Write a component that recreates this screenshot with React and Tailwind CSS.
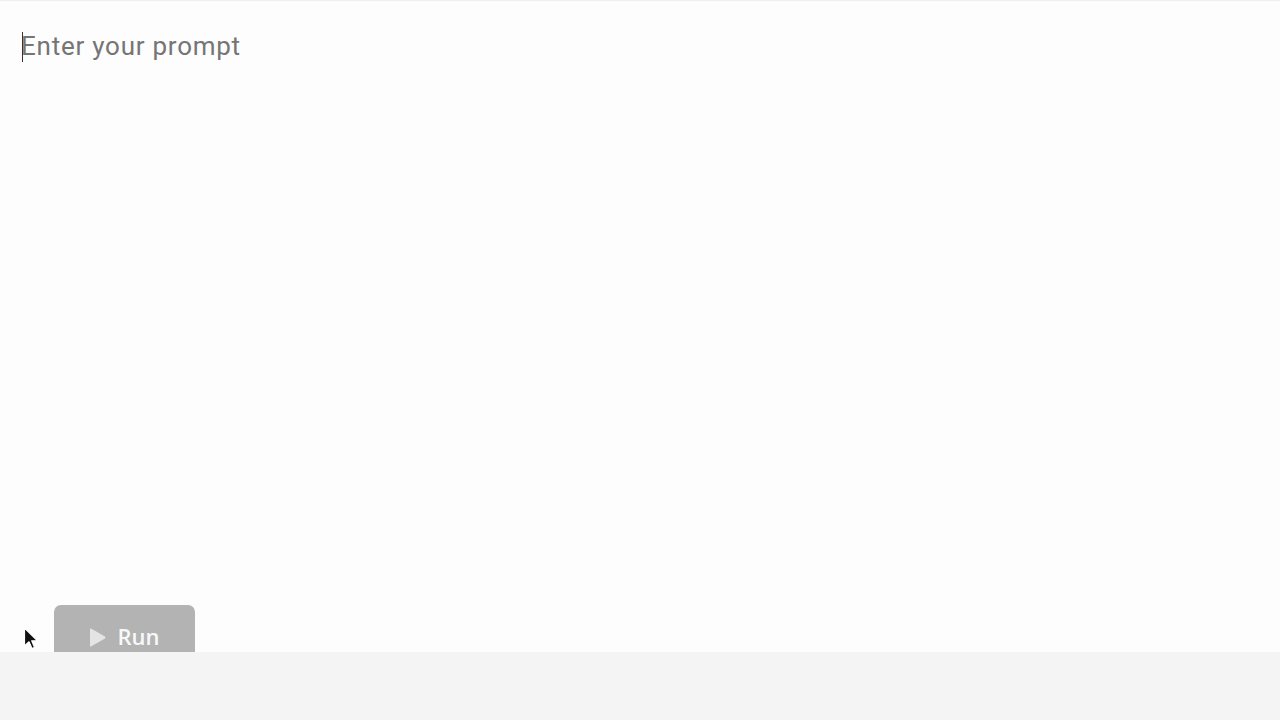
import React from 'react';

export default function App() {
  return (
    <div className="w-full h-screen flex flex-col bg-[#f4f4f4]" style={{ fontFamily: 'Roboto, "Noto Sans", sans-serif' }}>
      <div className="relative h-[652px] shrink-0 overflow-hidden bg-[#fdfdfd] border-t border-[#efefef]">
        <div className="flex flex-col px-[21px] pt-[28px]">
          <textarea
            placeholder="Enter your prompt"
            className="h-[576px] w-full resize-none bg-transparent outline-none text-[26px] leading-[34px] tracking-[0.75px] text-[#333] placeholder:text-[#757575]"
          />
          <div className="flex">
            <button className="ml-[33px] h-[62px] w-[141px] rounded-[7px] bg-[#b3b3b3] flex items-center justify-center gap-[10px] text-white" style={{ fontFamily: '"Open Sans", sans-serif' }}>
              <svg width="18" height="21" viewBox="0 0 18 21" className="mt-[3px]">
                <path d="M1 2.5 Q1 1 2.4 1.7 L16 9.5 Q17 10.5 16 11.5 L2.4 19.3 Q1 20 1 18.5 Z" fill="#e4e4e4" />
              </svg>
              <span className="text-[22px] font-semibold text-[#f8f8f8] mt-[1px]">Run</span>
            </button>
          </div>
        </div>
        <span className="absolute left-[22px] top-[31px] w-[1px] h-[30px] bg-[#333]" />
        <svg className="absolute left-[23px] top-[626px]" width="16" height="24" viewBox="0 0 16 24">
          <path d="M1.5 1 L1.5 19 L6 14.8 L9 21.5 L11.6 20.4 L8.7 13.8 L14.5 13.8 Z" fill="#111" stroke="#fff" strokeWidth="1.2" strokeLinejoin="round" />
        </svg>
      </div>
      <div className="flex-1" />
    </div>
  );
}
